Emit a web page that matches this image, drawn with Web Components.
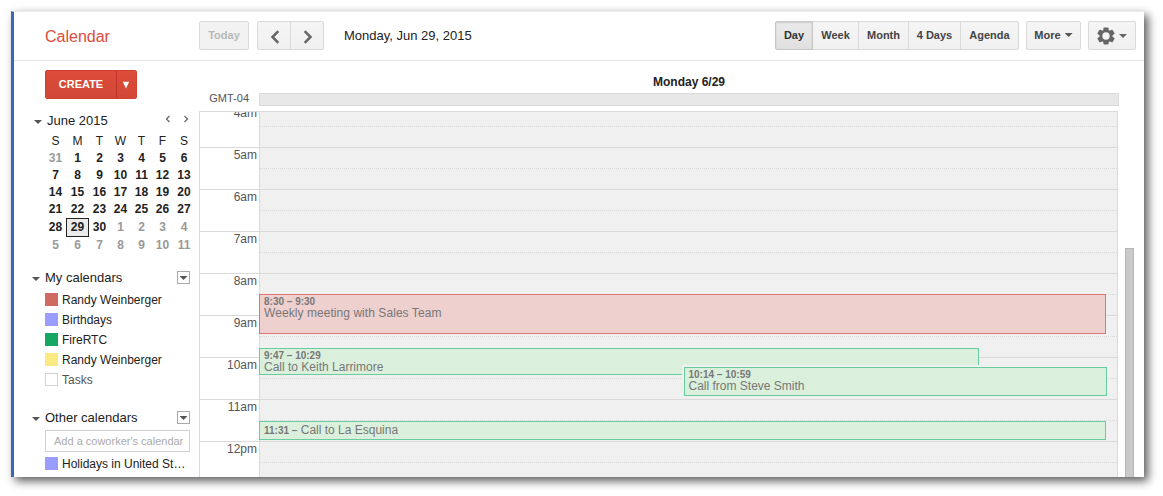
<!DOCTYPE html>
<html lang="en">
<head>
<meta charset="utf-8">
<title>Calendar</title>
<style>
    body {
        margin: 0;
        width: 1163px;
        height: 496px;
        overflow: hidden;
        background: #fff;
        font-family: "Liberation Sans", Arial, sans-serif;
        color: #222;
    }
</style>
</head>
<body>
<cal-app></cal-app>

<script>
class CalButton extends HTMLElement {
    constructor() {
        super();

        this.attachShadow({mode: "open"});
        this.shadowRoot.innerHTML = `
            <style>
                :host {
                    display: flex;
                    align-items: center;
                    justify-content: center;
                    box-sizing: border-box;
                    height: 29px;
                    border: 1px solid #d9d9d9;
                    border-radius: 2px;
                    background: linear-gradient(#f5f5f5, #f0f0f0);
                    color: #444;
                    font-size: 11px;
                    font-weight: bold;
                    line-height: 27px;
                    white-space: nowrap;
                }

                :host([disabled]) {
                    background: #f2f2f2;
                    color: #b8b8b8;
                }

                :host([group]) {
                    border-radius: 0;
                    margin-left: -1px;
                }

                :host([group="first"]) {
                    border-radius: 2px 0 0 2px;
                    margin-left: 0;
                }

                :host([group="last"]) {
                    border-radius: 0 2px 2px 0;
                }

                :host([active]) {
                    position: relative;
                    border-color: #c6c6c6;
                    background: linear-gradient(#eaeaea, #e0e0e0);
                    box-shadow: inset 0 1px 2px rgba(0,0,0,0.12);
                    color: #333;
                }
            </style>
            <slot></slot>
        `;
    }
}

class CalArrow extends HTMLElement {
    constructor() {
        super();

        this.attachShadow({mode: "open"});
        this.shadowRoot.innerHTML = `
            <style>
                :host {
                    display: block;
                    width: 8px;
                    height: 4px;
                    background: #555;
                    clip-path: polygon(0 0, 100% 0, 50% 100%);
                }
            </style>
        `;
    }
}

class CalHeader extends HTMLElement {
    constructor() {
        super();

        this.attachShadow({mode: "open"});
        this.shadowRoot.innerHTML = `
            <style>
                :host {
                    display: flex;
                    box-sizing: border-box;
                    height: 49px;
                    padding: 9px 8px 0 31px;
                    border-bottom: 1px solid #e5e5e5;
                    line-height: 29px;
                }

                .logo {
                    width: 154px;
                    font-size: 16px;
                    color: #dd4b39;
                    padding-top: 1px;
                }

                .group {
                    display: flex;
                }

                .date {
                    flex: 1;
                    padding-left: 20px;
                    font-size: 13px;
                }

                svg {
                    display: block;
                }

                .chevron {
                    margin: 2px 0 0 2px;
                }

                .more, .gear {
                    margin-left: 7px;
                }

                .more cal-arrow {
                    margin: 0 0 1px 4px;
                }

                .gear cal-arrow {
                    margin: 1px 0 0 4px;
                    background: #666;
                }
            </style>

            <div class="logo">Calendar</div>
            <cal-button disabled style="width: 50px; margin-right: 8px">Today</cal-button>
            <div class="group">
                <cal-button group="first" style="width: 34px">
                    <svg class="chevron" width="10" height="14" viewBox="0 0 10 14"><path d="M8.3 1.2L2.5 7L8.3 12.8" fill="none" stroke="#666" stroke-width="2.5"/></svg>
                </cal-button>
                <cal-button group="last" style="width: 34px">
                    <svg class="chevron" width="10" height="14" viewBox="0 0 10 14"><path d="M1.7 1.2L7.5 7L1.7 12.8" fill="none" stroke="#666" stroke-width="2.5"/></svg>
                </cal-button>
            </div>
            <div class="date">Monday, Jun 29, 2015</div>
            <div class="group">
                <cal-button group="first" active style="width: 38px">Day</cal-button>
                <cal-button group style="width: 47px">Week</cal-button>
                <cal-button group style="width: 51px">Month</cal-button>
                <cal-button group style="width: 53px">4 Days</cal-button>
                <cal-button group="last" style="width: 59px">Agenda</cal-button>
            </div>
            <cal-button class="more" style="width: 55px">More<cal-arrow></cal-arrow></cal-button>
            <cal-button class="gear" style="width: 48px">
                <svg width="18" height="18" viewBox="-9 -9 18 18">
                    <g fill="#666">
                        <rect x="-2.6" y="-8.5" width="5.2" height="17" rx="1"/>
                        <rect x="-2.6" y="-8.8" width="5.2" height="17.6" rx="1" transform="rotate(60)"/>
                        <rect x="-2.6" y="-8.8" width="5.2" height="17.6" rx="1" transform="rotate(120)"/>
                        <circle r="6.6"/>
                    </g>
                    <circle r="3.7" fill="#f3f3f3"/>
                </svg>
                <cal-arrow></cal-arrow>
            </cal-button>
        `;
    }
}

class CalMini extends HTMLElement {
    constructor() {
        super();

        this.attachShadow({mode: "open"});
        this.shadowRoot.innerHTML = `
            <style>
                :host {
                    display: block;
                }

                .head {
                    display: flex;
                    align-items: center;
                    box-sizing: border-box;
                    height: 23px;
                    padding: 0 10px 3px 20px;
                    font-size: 13px;
                }

                .head cal-arrow {
                    margin: 4px 5px 0 0;
                }

                .head span {
                    flex: 1;
                }

                .head svg {
                    margin: -3px 0 0 12px;
                }

                .days {
                    display: grid;
                    grid-template-columns: 21px 23px 21px 21px 21px 21px 22px;
                    grid-template-rows: repeat(5, 17px) 19px 16px;
                    margin-left: 31px;
                    font-size: 12px;
                    text-align: center;
                    line-height: 17px;
                }

                b._other {
                    color: #999;
                }

                ._late {
                    line-height: 19px;
                }

                ._today {
                    box-sizing: border-box;
                    height: 19px;
                    border: 1px solid #222;
                    background: #ebebeb;
                    line-height: 17px;
                }
            </style>

            <div class="head">
                <cal-arrow></cal-arrow>
                <span>June 2015</span>
                <svg width="6" height="8" viewBox="0 0 6 8"><path d="M4.5 1L1.5 4L4.5 7" fill="none" stroke="#666" stroke-width="1.3"/></svg>
                <svg width="6" height="8" viewBox="0 0 6 8"><path d="M1.5 1L4.5 4L1.5 7" fill="none" stroke="#666" stroke-width="1.3"/></svg>
            </div>
            <div class="days" id="days"></div>
        `;
    }

    connectedCallback() {
        let html = '';

        for (const name of 'SMTWTFS') {
            html += `<span>${name}</span>`;
        }

        // the grid begins on May 31
        for (let i = 0; i < 42; i++) {
            const other = i === 0 || i > 30;
            const day = i === 0 ? 31 : i > 30 ? i - 30 : i;
            const classes = [other && '_other', i > 27 && i < 35 && '_late', i === 29 && '_today'];
            html += `<b class="${classes.filter(Boolean).join(' ')}">${day}</b>`;
        }

        this.shadowRoot.querySelector('#days').innerHTML = html;
    }
}

class CalList extends HTMLElement {
    constructor() {
        super();

        this.attachShadow({mode: "open"});
        this.shadowRoot.innerHTML = `
            <style>
                :host {
                    display: block;
                    padding: 0 9px 0 18px;
                }

                .head {
                    display: flex;
                    align-items: center;
                    height: 24px;
                    margin-bottom: 1px;
                    font-size: 13px;
                }

                .head > cal-arrow {
                    margin: 4px 5px 0 0;
                }

                .head span {
                    flex: 1;
                }

                .menu {
                    display: flex;
                    align-items: center;
                    justify-content: center;
                    box-sizing: border-box;
                    width: 13px;
                    height: 13px;
                    margin-top: 1px;
                    border: 1px solid #aaa;
                }

                .menu cal-arrow {
                    margin-top: 1px;
                }

                .items {
                    margin-left: 13px;
                }
            </style>

            <div class="head">
                <cal-arrow></cal-arrow>
                <span>${this.getAttribute('name')}</span>
                <div class="menu"><cal-arrow></cal-arrow></div>
            </div>
            <div class="items"><slot></slot></div>
        `;
    }
}

class CalListItem extends HTMLElement {
    constructor() {
        super();

        this.attachShadow({mode: "open"});
        this.shadowRoot.innerHTML = `
            <style>
                :host {
                    display: flex;
                    align-items: center;
                    height: 20px;
                    font-size: 12px;
                    white-space: nowrap;
                }

                :host([off]) {
                    color: #555;
                }

                i {
                    box-sizing: border-box;
                    width: 13px;
                    height: 13px;
                    margin: -1px 4px 0 0;
                    background: var(--color);
                }

                :host([off]) i {
                    border: 1px solid #d5d5d5;
                }
            </style>
            <i></i><slot></slot>
        `;
    }
}

class CalSidebar extends HTMLElement {
    constructor() {
        super();

        this.attachShadow({mode: "open"});
        this.shadowRoot.innerHTML = `
            <style>
                :host {
                    display: block;
                    width: 185px;
                    padding-top: 9px;
                }

                .create {
                    display: flex;
                    box-sizing: border-box;
                    width: 92px;
                    height: 29px;
                    margin: 0 0 11px 31px;
                    border: 1px solid #d04030;
                    border-radius: 2px;
                    background: linear-gradient(#dd4b39, #d14836);
                    color: #fff;
                    font-size: 11px;
                    font-weight: bold;
                    line-height: 27px;
                    text-align: center;
                }

                .create span {
                    width: 70px;
                    border-right: 1px solid #c0322a;
                }

                .create svg {
                    margin: 10px 0 0 5px;
                }

                .search {
                    box-sizing: border-box;
                    height: 22px;
                    margin-bottom: 2px;
                    padding-left: 8px;
                    border: 1px solid #d0d0d0;
                    color: #aaa;
                    font-size: 11px;
                    line-height: 20px;
                    white-space: nowrap;
                }
            </style>

            <div class="create">
                <span>CREATE</span>
                <svg width="8" height="8" viewBox="0 0 8 8"><path d="M.8 .8H7.2L4 7.4Z" fill="#fff"/></svg>
            </div>
            <cal-mini></cal-mini>
            <cal-list name="My calendars" style="margin-top: 12px">
                <cal-list-item style="--color: #d06b64">Randy Weinberger</cal-list-item>
                <cal-list-item style="--color: #9a9cff">Birthdays</cal-list-item>
                <cal-list-item style="--color: #16a765">FireRTC</cal-list-item>
                <cal-list-item style="--color: #fbe983">Randy Weinberger</cal-list-item>
                <cal-list-item off>Tasks</cal-list-item>
            </cal-list>
            <cal-list name="Other calendars" style="margin-top: 15px">
                <div class="search">Add a coworker's calendar</div>
                <cal-list-item style="--color: #9a9cff">Holidays in United St…</cal-list-item>
            </cal-list>
        `;
    }
}

class CalEvent extends HTMLElement {
    constructor() {
        super();

        this.attachShadow({mode: "open"});
        this.shadowRoot.innerHTML = `
            <style>
                :host {
                    display: block;
                    position: absolute;
                    box-sizing: border-box;
                    padding: 1px 4px;
                    border: 1px solid #68cc9d;
                    background: #dbf0dc;
                    color: #777;
                    font-size: 12px;
                    line-height: 12px;
                    white-space: nowrap;
                }

                :host([red]) {
                    border-color: #db7670;
                    background: #eed0ce;
                    letter-spacing: 0.06px;
                }

                :host([front]) {
                    padding-left: 3.5px;
                    box-shadow: -2px -2px 0 #f0f0f0, -2px 0 0 #f0f0f0;
                }

                b {
                    display: block;
                    font-size: 10px;
                    letter-spacing: 0;
                    line-height: 11px;
                }

                :host([short]) {
                    line-height: 15px;
                }

                :host([short]) b {
                    display: inline;
                }
            </style>
            <b>${this.getAttribute('time')}</b> <slot></slot>
        `;
    }
}

class CalDay extends HTMLElement {
    constructor() {
        super();

        this.attachShadow({mode: "open"});
        this.shadowRoot.innerHTML = `
            <style>
                :host {
                    display: flex;
                    flex-direction: column;
                    flex: 1;
                    padding-top: 12px;
                }

                h1 {
                    width: 860px;
                    height: 20px;
                    margin: 0 0 0 60px;
                    font-size: 12px;
                    line-height: 18px;
                    text-align: center;
                }

                .allday {
                    display: flex;
                    height: 13px;
                    margin-bottom: 5px;
                    font-size: 11px;
                    line-height: 11px;
                    color: #555;
                }

                .allday span {
                    width: 50px;
                    padding-right: 10px;
                    text-align: right;
                }

                .allday div {
                    box-sizing: border-box;
                    width: 860px;
                    border: 1px solid #dadada;
                    background: #e8e8e8;
                }

                .bottom {
                    display: flex;
                    flex: 1;
                    min-height: 0;
                }

                .grid {
                    position: relative;
                    box-sizing: border-box;
                    width: 919px;
                    height: 366px;
                    border: 1px solid #dadada;
                    border-bottom: 0;
                    overflow: hidden;
                }

                /* scrolled so that 4am is partly under the top edge */
                .hours {
                    margin-top: -6px;
                }

                .hour {
                    display: flex;
                    height: 41px;
                    border-bottom: 1px solid #dadada;
                }

                .hour span {
                    width: 57px;
                    padding-right: 2px;
                    font-size: 12px;
                    line-height: 14px;
                    text-align: right;
                    color: #555;
                }

                .hour div {
                    flex: 1;
                    border-left: 1px solid #dadada;
                    background: #f0f0f0;
                }

                .hour div::before {
                    content: "";
                    display: block;
                    height: 20px;
                    border-bottom: 1px dotted #d8d8d8;
                }

                .thumb {
                    box-sizing: border-box;
                    width: 9px;
                    height: 229px;
                    margin: 137px 0 0 7px;
                    border: 1px solid #b5b5b5;
                    border-bottom: 0;
                    background: #cacaca;
                }
            </style>

            <h1>Monday 6/29</h1>
            <div class="allday"><span>GMT-04</span><div></div></div>
            <div class="bottom">
                <div class="grid">
                    <div class="hours" id="hours"></div>
                    <cal-event red time="8:30 – 9:30" style="left: 59px; top: 182px; width: 847px; height: 40px">Weekly meeting with Sales Team</cal-event>
                    <cal-event time="9:47 – 10:29" style="left: 59px; top: 236px; width: 720px; height: 27px">Call to Keith Larrimore</cal-event>
                    <cal-event front time="10:14 – 10:59" style="left: 484px; top: 255px; width: 423px; height: 29px">Call from Steve Smith</cal-event>
                    <cal-event short time="11:31 –" style="left: 59px; top: 309px; width: 847px; height: 19px">Call to La Esquina</cal-event>
                </div>
                <div class="thumb"></div>
            </div>
        `;
    }

    connectedCallback() {
        const hours = ['4am', '5am', '6am', '7am', '8am', '9am', '10am', '11am', '12pm'];

        this.shadowRoot.querySelector('#hours').innerHTML = hours
            .map((hour) => `<div class="hour"><span>${hour}</span><div></div></div>`)
            .join('');
    }
}

class CalApp extends HTMLElement {
    constructor() {
        super();

        this.attachShadow({mode: "open"});
        this.shadowRoot.innerHTML = `
            <style>
                :host {
                    display: block;
                    padding: 11px;
                }

                .window {
                    box-sizing: border-box;
                    width: 1133px;
                    height: 466px;
                    border-left: 3px solid #3b68b5;
                    border-top: 1px solid #ececec;
                    background: #fff;
                    box-shadow: 4px 4px 9px rgba(0,0,0,0.65);
                }

                .content {
                    display: flex;
                    height: 416px;
                    overflow: hidden;
                }
            </style>

            <div class="window">
                <cal-header></cal-header>
                <div class="content">
                    <cal-sidebar></cal-sidebar>
                    <cal-day></cal-day>
                </div>
            </div>
        `;
    }
}

customElements.define('cal-button', CalButton);
customElements.define('cal-arrow', CalArrow);
customElements.define('cal-header', CalHeader);
customElements.define('cal-mini', CalMini);
customElements.define('cal-list', CalList);
customElements.define('cal-list-item', CalListItem);
customElements.define('cal-sidebar', CalSidebar);
customElements.define('cal-event', CalEvent);
customElements.define('cal-day', CalDay);
customElements.define('cal-app', CalApp);
</script>
</body>
</html>
